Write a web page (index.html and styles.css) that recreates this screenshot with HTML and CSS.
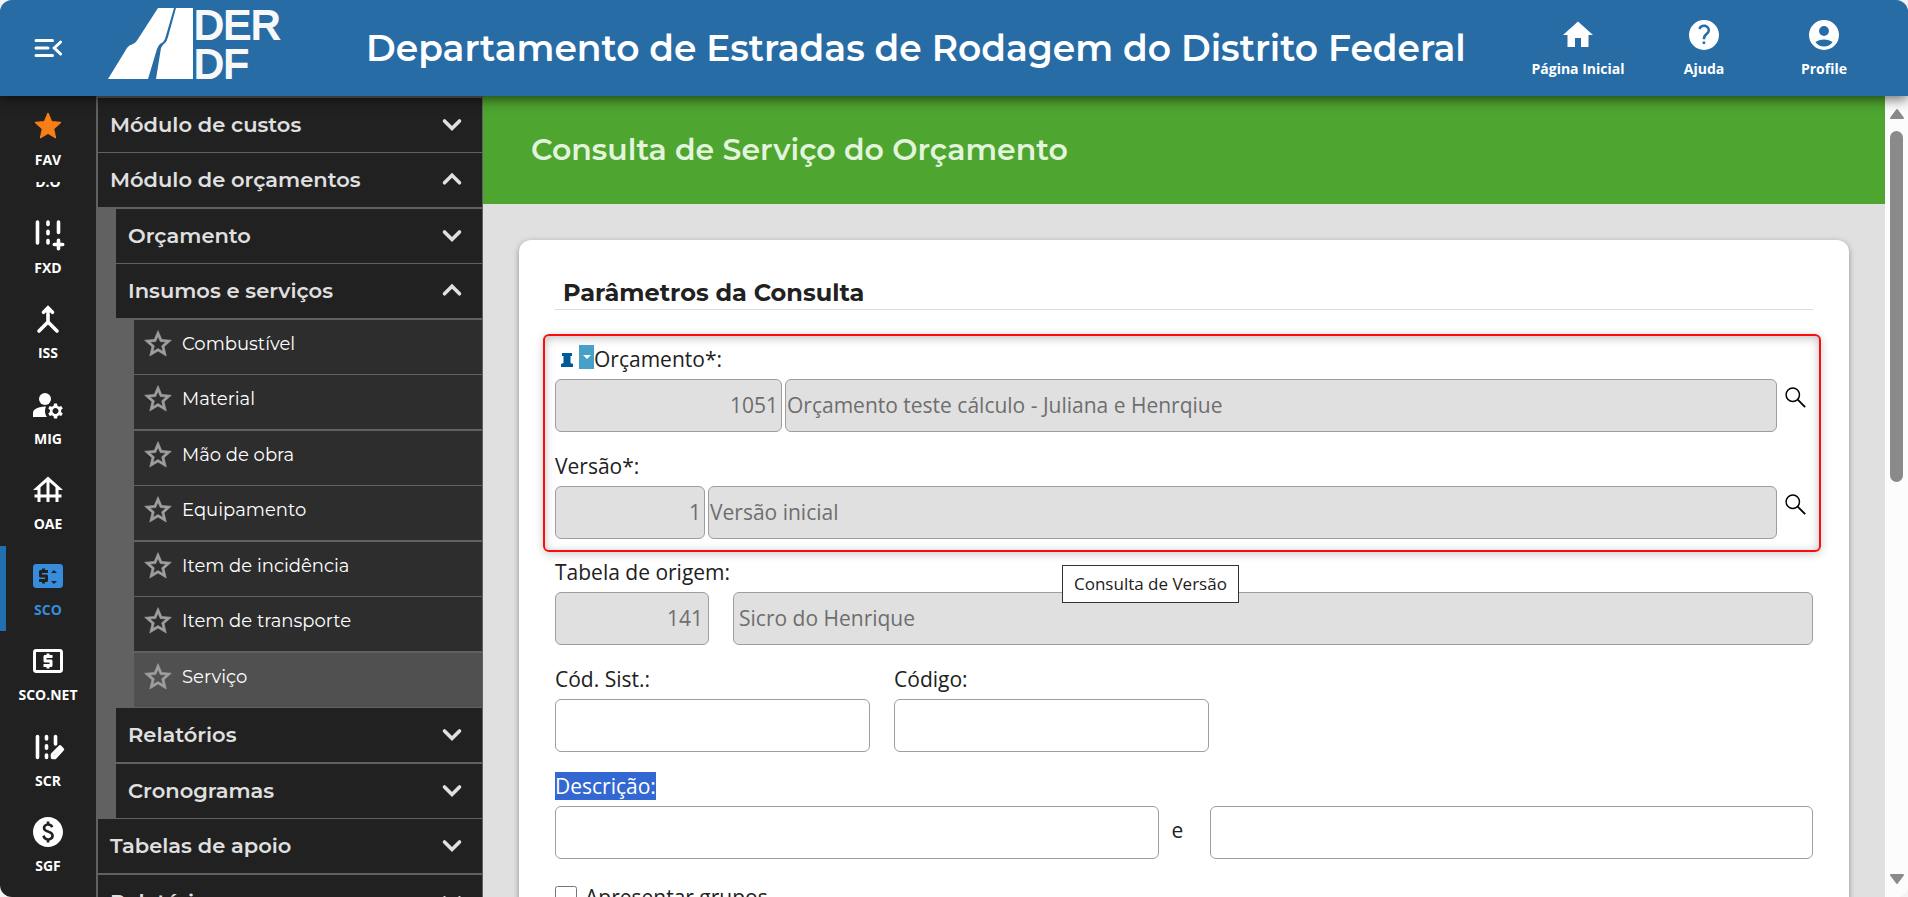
FILE: index.html
```html
<!DOCTYPE html>
<html lang="pt-BR">
<head>
<meta charset="utf-8">
<title>Consulta de Serviço do Orçamento</title>
<link rel="stylesheet" href="styles.css">
</head>
<body>
<svg class="defs" aria-hidden="true">
  <symbol id="down" viewBox="0 0 24 24"><path d="M7 10l5 5 5-5" fill="none" stroke="currentColor" stroke-width="2.4" stroke-linecap="round"/></symbol>
  <symbol id="up" viewBox="0 0 24 24"><path d="M7 14.5l5-5 5 5" fill="none" stroke="currentColor" stroke-width="2.4" stroke-linecap="round"/></symbol>
  <symbol id="star" viewBox="0 0 24 24"><path fill="currentColor" stroke="currentColor" stroke-width=".5" d="M22 9.24l-7.19-.62L12 2 9.19 8.63 2 9.24l5.46 4.73L5.82 21 12 17.27 18.18 21l-1.63-7.03L22 9.24zM12 15.4l-3.76 2.27 1-4.28-3.32-2.88 4.38-.38L12 6.1l1.71 4.04 4.38.38-3.32 2.88 1 4.28L12 15.4z"/></symbol>
  <symbol id="search" viewBox="0 0 24 24"><circle cx="8.500" cy="8.500" r="7.300" fill="none" stroke="currentColor" stroke-width="1.600"/><path d="M13.600 13.600l8.400 8.400" stroke="currentColor" stroke-width="2"/></symbol>
</svg>
<div class="app">
  <header class="topbar">
    <button class="menu-toggle" aria-label="Recolher menu">
      <svg class="icon" viewBox="0 0 24 24"><path d="M4 7h11M4 12h8M4 17h11M20.4 8L16.2 12l4.2 4" fill="none" stroke="currentColor" stroke-width="2" stroke-linecap="round"/></svg>
    </button>
    <svg class="logo" viewBox="0 0 178 72" role="img" aria-label="DER DF">
      <path fill="#fff" d="M50 0H66L57 31Q56 34 52 36Q50 38 49 41L40 71H0L19 40Q21 37 25 36Q28 35 30 31ZM68 0H85V71H48L53 40Q54 37 57 35Q59 33 60 29Z"/>
      <text class="logo-text" x="86" y="31">DER</text>
      <text class="logo-text" x="86" y="70">DF</text>
    </svg>
    <h1 class="brand">Departamento de Estradas de Rodagem do Distrito Federal</h1>
    <nav class="top-links">
      <a class="top-link wide" href="#"><svg class="icon" viewBox="0 0 24 24"><path fill="currentColor" d="M10 20v-6h4v6h5v-8h3L12 3 2 12h3v8z"/></svg>Página Inicial</a>
      <a class="top-link" href="#"><svg class="icon" viewBox="0 0 24 24"><path fill="currentColor" fill-rule="evenodd" d="M12 2a10 10 0 1 0 0 20 10 10 0 0 0 0-20zm.8 16h-1.7v-1.7h1.700zM14.900 11.400c-1.300 1.300-2 1.900-2.100 3.400h-1.700c0-2.200 1-3.200 2.200-4.300.9-.8 1.200-1.400 1-2.200-.2-1-1.200-1.700-2.300-1.700-1.100 0-2 .7-2.300 1.700l-1.500-.7C8.700 6 10.200 5 12 5c2.200 0 4 1.700 4 3.700 0 1.100-.4 2-1.100 2.700z"/></svg>Ajuda</a>
      <a class="top-link" href="#"><svg class="icon" viewBox="0 0 24 24"><path fill="currentColor" fill-rule="evenodd" d="M12 2a10 10 0 1 0 0 20 10 10 0 0 0 0-20zm0 4a3.300 3.300 0 1 1 0 6.600 3.300 3.300 0 0 1 0-6.600zM6.300 16.800C7.800 15.600 9.800 15 12 15s4.200.6 5.700 1.800C16.400 18.600 14.300 19.700 12 19.700s-4.400-1.100-5.700-2.900z"/></svg>Profile</a>
    </nav>
  </header>

  <div class="body">
    <nav class="rail">
      <a class="rail-item fav" href="#"><svg class="icon-small" viewBox="0 0 24 24"><path fill="#f77f16" stroke="#f77f16" stroke-linejoin="round" d="M12 17.300L17.600 20.800 16.200 14.100 21.400 9.300 14.600 8.700 12 2.500 9.400 8.700 2.600 9.300 7.800 14.100 6.400 20.800z"/></svg>FAV</a>
      <a class="rail-cut" href="#">D.O</a>
      <div class="rail-list">
        <a class="rail-item" href="#"><svg class="icon" viewBox="0 0 24 24"><path d="M5 4v14M12 4v1.600M12 10.200v1.600M12 16.400v1.600M19 4v7M19 16.200v5.600M16.200 19h5.600" fill="none" stroke="currentColor" stroke-width="2.400" stroke-linecap="round"/></svg>FXD</a>
        <a class="rail-item" href="#"><svg class="icon" viewBox="0 0 24 24"><path d="M12 5v9L6 20M12 14l6 6M9 7.500l3-3 3 3" fill="none" stroke="currentColor" stroke-width="2.400" stroke-linecap="round"/></svg>ISS</a>
        <a class="rail-item" href="#"><svg class="icon" viewBox="0 0 24 24"><circle cx="10" cy="8" r="4" fill="currentColor"/><path fill="currentColor" d="M10.670 13.020C10.450 13.010 10.230 13 10 13c-2.420 0-4.680.67-6.610 1.820-.88.52-1.390 1.500-1.390 2.530V20h9.260c-.79-1.130-1.260-2.510-1.260-4 0-1.070.25-2.070.67-2.980zM20.750 16c0-.22-.03-.42-.06-.63l1.140-1.010-1-1.730-1.450.49c-.32-.27-.68-.48-1.080-.63L18 11h-2l-.3 1.490c-.4.15-.76.36-1.080.63l-1.450-.49-1 1.730 1.140 1.010c-.03.21-.06.41-.06.63s.03.42.06.63l-1.140 1.010 1 1.730 1.450-.49c.32.27.68.48 1.080.63L16 21h2l.3-1.490c.4-.15.76-.36 1.080-.63l1.450.49 1-1.730-1.140-1.010c.03-.21.06-.41.06-.63zM17 18c-1.100 0-2-.9-2-2s.9-2 2-2 2 .9 2 2-.9 2-2 2z"/></svg>MIG</a>
        <a class="rail-item" href="#"><svg class="icon" viewBox="0 0 24 24"><path fill="currentColor" d="M19 12h3L12 3 2 12h3v3H3v2h2v3h2v-3h4v3h2v-3h4v3h2v-3h2v-2h-2v-3zM7 15v-4.810l4-3.600V15H7zm6 0V6.590l4 3.600V15h-4z"/></svg>OAE</a>
        <a class="rail-item active" href="#"><svg class="icon" viewBox="0 0 24 24"><path fill="currentColor" d="M20 4H4c-1.110 0-1.990.89-1.990 2L2 18c0 1.110.89 2 2 2h16c1.110 0 2-.89 2-2V6c0-1.110-.89-2-2-2zm-8 6H8v1h3c.55 0 1 .45 1 1v3c0 .55-.45 1-1 1h-1v1H8v-1H6v-2h4v-1H7c-.55 0-1-.45-1-1V9c0-.55.45-1 1-1h1V7h2v1h2v2zm4 7.250l-2-2h4l-2 2zM14 10l2-2 2 2h-4z"/></svg>SCO</a>
        <a class="rail-item" href="#"><svg class="icon" viewBox="0 0 24 24"><path fill="currentColor" d="M11 17h2v-1h1c.55 0 1-.45 1-1v-3c0-.55-.45-1-1-1h-3v-1h4V8h-2V7h-2v1h-1c-.55 0-1 .45-1 1v3c0 .55.45 1 1 1h3v1H9v2h2v1zm9-13H4c-1.110 0-1.990.89-1.990 2L2 18c0 1.110.89 2 2 2h16c1.110 0 2-.89 2-2V6c0-1.110-.89-2-2-2zm0 14H4V6h16v12z"/></svg>SCO.NET</a>
        <a class="rail-item" href="#"><svg class="icon" viewBox="0 0 24 24"><path d="M5 5v14M11 5v1.600M11 11.200v1.600M11 17.400v1.600M17 5v5" fill="none" stroke="currentColor" stroke-width="2.400" stroke-linecap="round"/><path d="M15 19v-2l5-5 1.600 1.600-5 5.400z" fill="none" stroke="currentColor" stroke-width="2.400" stroke-linejoin="round"/></svg>SCR</a>
        <a class="rail-item" href="#"><svg class="icon" viewBox="0 0 24 24"><path fill="currentColor" d="M12 2C6.480 2 2 6.480 2 12s4.480 10 10 10 10-4.480 10-10S17.520 2 12 2zm.88 15.760V19h-1.750v-1.290c-.74-.18-2.390-.77-3.020-2.960l1.650-.67c.06.22.58 2.090 2.400 2.090.93 0 1.980-.48 1.980-1.610 0-.96-.7-1.460-2.280-2.030-1.100-.39-3.350-1.030-3.350-3.310 0-.1.01-2.400 2.620-2.960V5h1.750v1.240c1.840.32 2.510 1.790 2.660 2.230l-1.580.67c-.11-.35-.59-1.340-1.900-1.340-.7 0-1.810.37-1.810 1.390 0 .95.86 1.310 2.640 1.900 2.400.83 3.010 2.050 3.010 3.450 0 2.630-2.500 3.130-3.020 3.220z"/></svg>SGF</a>
      </div>
    </nav>

    <nav class="side">
      <ul class="tree">
        <li><button class="branch">Módulo de custos<svg class="icon"><use href="#down"/></svg></button></li>
        <li><button class="branch">Módulo de orçamentos<svg class="icon"><use href="#up"/></svg></button>
          <ul class="tree nested">
            <li><button class="branch">Orçamento<svg class="icon"><use href="#down"/></svg></button></li>
            <li><button class="branch">Insumos e serviços<svg class="icon"><use href="#up"/></svg></button>
              <ul class="tree nested">
                <li><a class="leaf" href="#"><svg class="icon-small"><use href="#star"/></svg>Combustível</a></li>
                <li><a class="leaf" href="#"><svg class="icon-small"><use href="#star"/></svg>Material</a></li>
                <li><a class="leaf" href="#"><svg class="icon-small"><use href="#star"/></svg>Mão de obra</a></li>
                <li><a class="leaf" href="#"><svg class="icon-small"><use href="#star"/></svg>Equipamento</a></li>
                <li><a class="leaf" href="#"><svg class="icon-small"><use href="#star"/></svg>Item de incidência</a></li>
                <li><a class="leaf" href="#"><svg class="icon-small"><use href="#star"/></svg>Item de transporte</a></li>
                <li><a class="leaf current" href="#"><svg class="icon-small"><use href="#star"/></svg>Serviço</a></li>
              </ul>
            </li>
            <li><button class="branch">Relatórios<svg class="icon"><use href="#down"/></svg></button></li>
            <li class="spaced"><button class="branch">Cronogramas<svg class="icon"><use href="#down"/></svg></button></li>
          </ul>
        </li>
        <li><button class="branch">Tabelas de apoio<svg class="icon"><use href="#down"/></svg></button></li>
        <li class="spaced"><button class="branch">Relatórios<svg class="icon"><use href="#down"/></svg></button></li>
      </ul>
    </nav>

    <main class="main">
      <div class="banner"><h2 class="page-title">Consulta de Serviço do Orçamento</h2></div>
      <form class="card">
        <h3 class="section-title">Parâmetros da Consulta</h3>
        <div class="required-group">
          <div class="field">
            <div class="label-row">
              <svg class="pin" viewBox="0 0 12 14" aria-hidden="true"><path fill="#005a96" d="M1 0h10v3H9.500v7L12 11v3H0v-3l2.500-1V3H1z"/></svg>
              <button class="pin-menu" type="button" aria-label="Opções"><svg class="caret" viewBox="0 0 8 4"><path fill="#fff" d="M0 0h8L4 4z"/></svg></button>
              <label class="label" for="orc">Orçamento*:</label>
            </div>
            <div class="controls">
              <input class="input code-large" id="orc" value="1051" disabled>
              <input class="input grow tight" aria-label="Nome do orçamento" value="Orçamento teste cálculo - Juliana e Henrqiue" disabled>
              <button class="lookup" type="button" aria-label="Consulta de Orçamento"><svg class="glass"><use href="#search"/></svg></button>
            </div>
          </div>
          <div class="field">
            <div class="label-row"><label class="label" for="ver">Versão*:</label></div>
            <div class="controls">
              <input class="input code-small" id="ver" value="1" disabled>
              <input class="input grow tight" aria-label="Nome da versão" value="Versão inicial" disabled>
              <button class="lookup" type="button" aria-label="Consulta de Versão"><svg class="glass"><use href="#search"/></svg></button>
            </div>
            <div class="tooltip" role="tooltip">Consulta de Versão</div>
          </div>
        </div>
        <div class="rows">
          <div class="field">
            <div class="label-row"><label class="label" for="tab">Tabela de origem:</label></div>
            <div class="controls loose">
              <input class="input code-table" id="tab" value="141" disabled>
              <input class="input grow" aria-label="Nome da tabela" value="Sicro do Henrique" disabled>
            </div>
          </div>
          <div class="quarters">
            <div class="field">
              <div class="label-row"><label class="label" for="sist">Cód. Sist.:</label></div>
              <div class="controls"><input class="input grow" id="sist"></div>
            </div>
            <div class="field">
              <div class="label-row"><label class="label" for="cod">Código:</label></div>
              <div class="controls"><input class="input grow" id="cod"></div>
            </div>
          </div>
          <div class="field">
            <div class="label-row"><label class="label" for="desc"><span class="selected">Descrição:</span></label></div>
            <div class="controls">
              <input class="input grow" id="desc">
              <span class="joiner">e</span>
              <input class="input grow" aria-label="Descrição, segundo termo">
            </div>
          </div>
          <div class="check-row"><input class="check" type="checkbox" id="grp"><label for="grp">Apresentar grupos</label></div>
        </div>
      </form>
    </main>

    <div class="scrollbar" aria-hidden="true">
      <svg class="arrow" viewBox="0 0 16 12"><path fill="#8a8a8a" stroke="#8a8a8a" stroke-width="2" stroke-linejoin="round" d="M8 2l6 8H2z"/></svg>
      <div class="track"><div class="thumb"></div></div>
      <svg class="arrow" viewBox="0 0 16 12"><path fill="#8a8a8a" stroke="#8a8a8a" stroke-width="2" stroke-linejoin="round" d="M8 10l6-8H2z"/></svg>
    </div>
  </div>
</div>
</body>
</html>
```
FILE: styles.css
```css
* { box-sizing: border-box; }
body {
  margin: 0;
  background: #f4f4f4;
  font-family: "Open Sans", "Noto Sans", sans-serif;
  font-size: 21px;
  color: #212121;
}
button { font: inherit; border: 0; background: none; padding: 0; color: inherit; }
a { color: inherit; text-decoration: none; }
h1, h2, h3, ul { margin: 0; padding: 0; }
.defs { display: none; }
.icon { width: 36px; height: 36px; flex: none; }
.icon-small { width: 32px; height: 32px; flex: none; }

.app {
  height: 100vh;
  display: flex;
  flex-direction: column;
  overflow: hidden;
  border-radius: 12px;
  background: #fcfcfc;
}

/* Top bar */
.topbar {
  z-index: 1;
  flex: none;
  height: 96px;
  display: flex;
  align-items: center;
  padding-right: 24px;
  background: #286ca6;
  color: #fff;
  box-shadow: 0 3px 12px rgba(0, 0, 0, .6);
}
.menu-toggle { width: 96px; height: 96px; flex: none; display: flex; align-items: center; justify-content: center; }
.logo { width: 178px; height: 72px; margin: 0 80px 8px 12px; flex: none; overflow: visible; }
.logo-text {
  font-family: "Liberation Sans", Arial, sans-serif;
  font-size: 41px;
  fill: #f8f8f8;
  stroke: #f8f8f8;
  stroke-width: 2;
}
.brand {
  flex: 1;
  font-family: Montserrat, Inter, sans-serif;
  font-size: 36px;
  line-height: 48px;
  font-weight: 600;
  white-space: nowrap;
}
.top-links { display: flex; }
.top-link {
  width: 120px;
  display: flex;
  flex-direction: column;
  align-items: center;
  gap: 6px;
  font-size: 14px;
  line-height: 20px;
  font-weight: 700;
}
.top-link.wide { width: 132px; }

.body { flex: 1; min-height: 0; display: flex; }

/* Module rail */
.rail { width: 96px; flex: none; overflow: hidden; background: #212121; color: #fff; font-size: 14px; font-weight: 700; }
.rail-item {
  height: 85px;
  padding-top: 12px;
  display: flex;
  flex-direction: column;
  align-items: center;
  gap: 6px;
  line-height: 20px;
}
.rail-item:nth-child(even) { height: 86px; }
.rail-item.fav { height: 86px; padding-top: 14px; gap: 8px; }
.rail-item.active { color: #378cdc; border-left: 6px solid #216eb0; padding-right: 6px; }
.rail-cut { height: 22px; display: flex; justify-content: center; overflow: hidden; line-height: 0; }

/* Menu tree */
.side {
  width: 387px;
  flex: none;
  overflow: hidden;
  padding: 2px 1px 0 2px;
  background: #616161;
  font-family: Montserrat, Inter, sans-serif;
}
.tree { list-style: none; }
.tree > li + li { margin-top: 1px; }
.tree > li.spaced { margin-top: 2px; }
.nested { padding: 2px 0 0 18px; }
.nested .nested > li:nth-child(odd) { margin-top: 2px; }
.nested .nested > li:first-child { margin-top: 0; }
.branch {
  width: 100%;
  height: 54px;
  padding: 0 12px 2px;
  display: flex;
  align-items: center;
  justify-content: space-between;
  background: #212121;
  color: #e0e0e0;
  font-size: 21px;
  font-weight: 600;
}
.leaf {
  height: 54px;
  padding: 0 8px 7px;
  display: flex;
  align-items: center;
  gap: 8px;
  background: #2d2d2d;
  color: #fff;
  font-size: 18px;
}
.leaf.current { background: #505050; }
.leaf .icon-small { color: #9e9e9e; }

/* Page */
.main { flex: 1; min-width: 0; overflow: hidden; background: #e0e0e0; }
.banner { height: 108px; padding: 0 48px; display: flex; align-items: center; background: #4ea52f; }
.page-title {
  color: #e2f5dc;
  font-family: Montserrat, Inter, sans-serif;
  font-size: 30px;
  line-height: 40px;
  font-weight: 600;
}
.card {
  margin: 36px;
  padding: 36px;
  background: #fff;
  border-radius: 12px;
  box-shadow: 0 2px 6px rgba(0, 0, 0, .35);
}
.section-title {
  padding: 1px 8px 0;
  margin-bottom: 24px;
  border-bottom: 1px solid #dcdcdc;
  font-family: Montserrat, Inter, sans-serif;
  font-size: 24px;
  line-height: 32px;
  font-weight: 700;
}
.required-group {
  margin: 0 -8px 0 -12px;
  padding: 3px 6px 11px 10px;
  display: grid;
  gap: 14px;
  border: 2px solid #fb0d0d;
  border-radius: 6px;
  box-shadow: 0 2px 10px rgba(0, 0, 0, .2), inset 0 2px 10px rgba(0, 0, 0, .25);
}
.rows { display: grid; gap: 14px; }
.field { position: relative; min-width: 0; }
.label-row { height: 40px; display: flex; align-items: center; }
.label { line-height: 40px; }
.selected { background: #3367d1; color: #fff; }
.pin { width: 12px; height: 14px; margin: 2px 6px 0; }
.pin-menu { width: 15px; height: 24px; margin-bottom: 4px; display: flex; align-items: center; justify-content: center; background: #46a0c8; }
.caret { width: 8px; height: 4px; }
.controls { display: flex; gap: 3px; }
.controls.loose { gap: 24px; }
.input {
  min-width: 0;
  height: 53px;
  padding: 0 5px 1px;
  border: 1px solid #9e9e9e;
  border-radius: 6px;
  background: #fff;
  color: #212121;
  font: inherit;
}
.input:disabled { background: #e0e0e0; color: #6e6e6e; }
.grow { flex: 1; }
.tight { padding: 0 1px 1px; }
.code-large { width: 227px; text-align: right; padding: 0 3px 1px; }
.code-small { width: 150px; text-align: right; padding: 0 3px 1px; }
.code-table { width: 154px; text-align: right; }
.lookup { width: 33px; display: flex; padding: 8px 0 0 5px; color: #000; }
.glass { width: 22px; height: 22px; }
.tooltip {
  position: absolute;
  top: calc(100% + 26px);
  left: 507px;
  z-index: 2;
  padding: 0 11px;
  border: 1px solid #333;
  background: #fff;
  font-size: 17px;
  line-height: 36px;
  white-space: nowrap;
}
.quarters { width: 52%; display: grid; grid-template-columns: 1fr 1fr; gap: 24px; }
.joiner { width: 45px; padding-left: 10px; line-height: 48px; }
.check-row { display: flex; align-items: center; gap: 8px; padding-top: 8px; line-height: 32px; }
.check { width: 22px; height: 22px; margin: 0; }

/* Scrollbar */
.scrollbar { width: 23px; flex: none; padding: 12px 0; display: flex; flex-direction: column; align-items: center; background: #fcfcfc; }
.arrow { width: 16px; height: 12px; flex: none; }
.track { flex: 1; width: 13px; padding: 11px 0; }
.thumb { height: 48%; border-radius: 7px; background: #8a8a8a; }
```
